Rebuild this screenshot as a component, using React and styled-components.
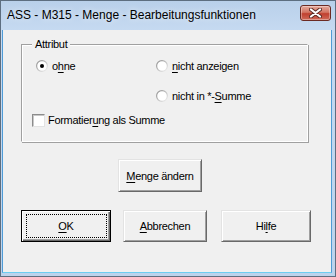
import React from 'react';
import styled, { createGlobalStyle } from 'styled-components';

const GlobalStyle = createGlobalStyle`
    html, body {
        margin: 0;
        padding: 0;
        background: #ffffff;
    }
    * {
        box-sizing: border-box;
    }
`;

const Window = styled.div`
    width: 336px;
    height: 277px;
    display: flex;
    flex-direction: column;
    border: 1px solid #5d6e80;
    padding: 0 3px 3px 1px;
    background: linear-gradient(#b9d0ea, #c6daf1 30px, #bcd3ec);
    font-family: "Liberation Sans", sans-serif;
    font-size: 11px;
    letter-spacing: -0.3px;
    color: #000;
`;

const TitleBar = styled.div`
    height: 29px;
    display: flex;
    align-items: flex-start;
    justify-content: space-between;
    padding: 0 1px 0 5px;
`;

const Title = styled.div`
    font-size: 12px;
    letter-spacing: 0;
    line-height: 29px;
    color: #000;
    text-shadow: 0 0 6px rgba(255, 255, 255, 0.8);
`;

const CloseButton = styled.div`
    margin-top: 4px;
    width: 31px;
    height: 16px;
    border: 1px solid #6b2a23;
    border-radius: 3px;
    background: linear-gradient(#e6a99c, #d27563 45%, #c0402f 55%, #cf6a58);
    box-shadow: inset 0 0 0 1px rgba(255, 255, 255, 0.35);
    display: flex;
    align-items: center;
    justify-content: center;
`;

const Client = styled.div`
    flex: 1;
    background: #f0f0f0;
    border: 1px solid #4f9bd6;
    border-top: none;
    border-bottom-color: #6ccdf0;
    display: flex;
    flex-direction: column;
`;

const GroupBox = styled.div`
    position: relative;
    margin: 14px 0 0 18px;
    width: 287px;
    height: 98px;
    border: 1px solid;
    border-color: #a0a0a0 #ffffff #ffffff #a0a0a0;
    box-shadow: inset 1px 1px 0 #ffffff, 1px 1px 0 #a0a0a0;
    padding: 13px 0 0 14px;
    display: flex;
    flex-direction: column;
`;

const Caption = styled.span`
    position: absolute;
    top: -8px;
    left: 10px;
    padding: 0 3px;
    line-height: 14px;
    background: #f0f0f0;
`;

const OptionRow = styled.div`
    display: grid;
    grid-template-columns: 120px 1fr;
    height: 16px;
    margin-top: ${p => p.$top || 0}px;
    margin-left: ${p => p.$left || 0}px;
`;

const Choice = styled.label`
    display: inline-flex;
    align-items: center;
    gap: ${p => p.$gap || 4}px;
    white-space: nowrap;
    grid-column: ${p => p.$col || 'auto'};
`;

const CheckBox = styled.span`
    width: 13px;
    height: 13px;
    background: #fff;
    border: 1px solid;
    border-color: #8c8c8c #e3e3e3 #e3e3e3 #8c8c8c;
    box-shadow: inset 1px 1px 0 #c8c8c8;
`;

const CenterRow = styled.div`
    display: flex;
    padding-left: 115px;
    margin-top: 17px;
`;

const ButtonRow = styled.div`
    display: flex;
    gap: 12px;
    padding-left: 18px;
    margin-top: 18px;
`;

const Button = styled.button`
    position: relative;
    width: ${p => p.$w}px;
    height: ${p => p.$h || 32}px;
    margin-left: ${p => p.$ml || 0}px;
    padding: 0;
    font-family: inherit;
    font-size: 11px;
    letter-spacing: inherit;
    color: #000;
    background: #f0f0f0;
    border: 1px solid;
    border-color: ${p => (p.$default ? '#000' : '#e3e3e3 #696969 #696969 #e3e3e3')};
    box-shadow: ${p =>
        p.$default
            ? 'inset 1px 1px 0 #ffffff, inset -1px -1px 0 #696969, inset -2px -2px 0 #a0a0a0'
            : 'inset 1px 1px 0 #ffffff, inset -1px -1px 0 #a0a0a0'};

    &::after {
        content: '';
        display: ${p => (p.$default ? 'block' : 'none')};
        position: absolute;
        inset: 3px 3px 3px 4px;
        border: 1px dotted #000;
    }
`;

const Key = styled.u`
    text-decoration: underline;
    text-underline-offset: 2px;
`;

function RadioMark({ checked }) {
    return (
        <svg width="12" height="12" viewBox="0 0 12 12">
            <defs>
                <linearGradient id="ring" x1="0" y1="0" x2="1" y2="1">
                    <stop offset="0" stopColor="#8a8a8a" />
                    <stop offset="1" stopColor="#f4f4f4" />
                </linearGradient>
            </defs>
            <circle cx="6" cy="6" r="5.4" fill="#fff" stroke="url(#ring)" strokeWidth="1.2" />
            {checked && <circle cx="6" cy="6" r="2" fill="#000" />}
        </svg>
    );
}

export default function App() {
    return (
        <>
            <GlobalStyle />
            <Window>
                <TitleBar>
                    <Title>ASS - M315 - Menge - Bearbeitungsfunktionen</Title>
                    <CloseButton>
                        <svg width="13" height="10" viewBox="0 0 13 10">
                            <path
                                d="M2 1.5 L11 8.5 M11 1.5 L2 8.5"
                                stroke="#5a2a24"
                                strokeWidth="4"
                                strokeLinecap="round"
                            />
                            <path
                                d="M2 1.5 L11 8.5 M11 1.5 L2 8.5"
                                stroke="#ffffff"
                                strokeWidth="2.2"
                                strokeLinecap="round"
                            />
                        </svg>
                    </CloseButton>
                </TitleBar>
                <Client>
                    <GroupBox>
                        <Caption>Attribut</Caption>
                        <OptionRow>
                            <Choice>
                                <RadioMark checked />
                                <span>o<Key>h</Key>ne</span>
                            </Choice>
                            <Choice>
                                <RadioMark />
                                <span><Key>n</Key>icht anzeigen</span>
                            </Choice>
                        </OptionRow>
                        <OptionRow $top={14}>
                            <Choice $col="2">
                                <RadioMark />
                                <span>nicht in *-<Key>S</Key>umme</span>
                            </Choice>
                        </OptionRow>
                        <OptionRow $top={8} $left={-4}>
                            <Choice $gap={3} $col="1 / -1">
                                <CheckBox />
                                <span>Formatier<Key>u</Key>ng als Summe</span>
                            </Choice>
                        </OptionRow>
                    </GroupBox>
                    <CenterRow>
                        <Button $w={84} $h={33}><Key>M</Key>enge ändern</Button>
                    </CenterRow>
                    <ButtonRow>
                        <Button $w={90} $default><Key>O</Key>K</Button>
                        <Button $w={84}><Key>A</Key>bbrechen</Button>
                        <Button $w={90} $ml={2}>Hi<Key>l</Key>fe</Button>
                    </ButtonRow>
                </Client>
            </Window>
        </>
    );
}
